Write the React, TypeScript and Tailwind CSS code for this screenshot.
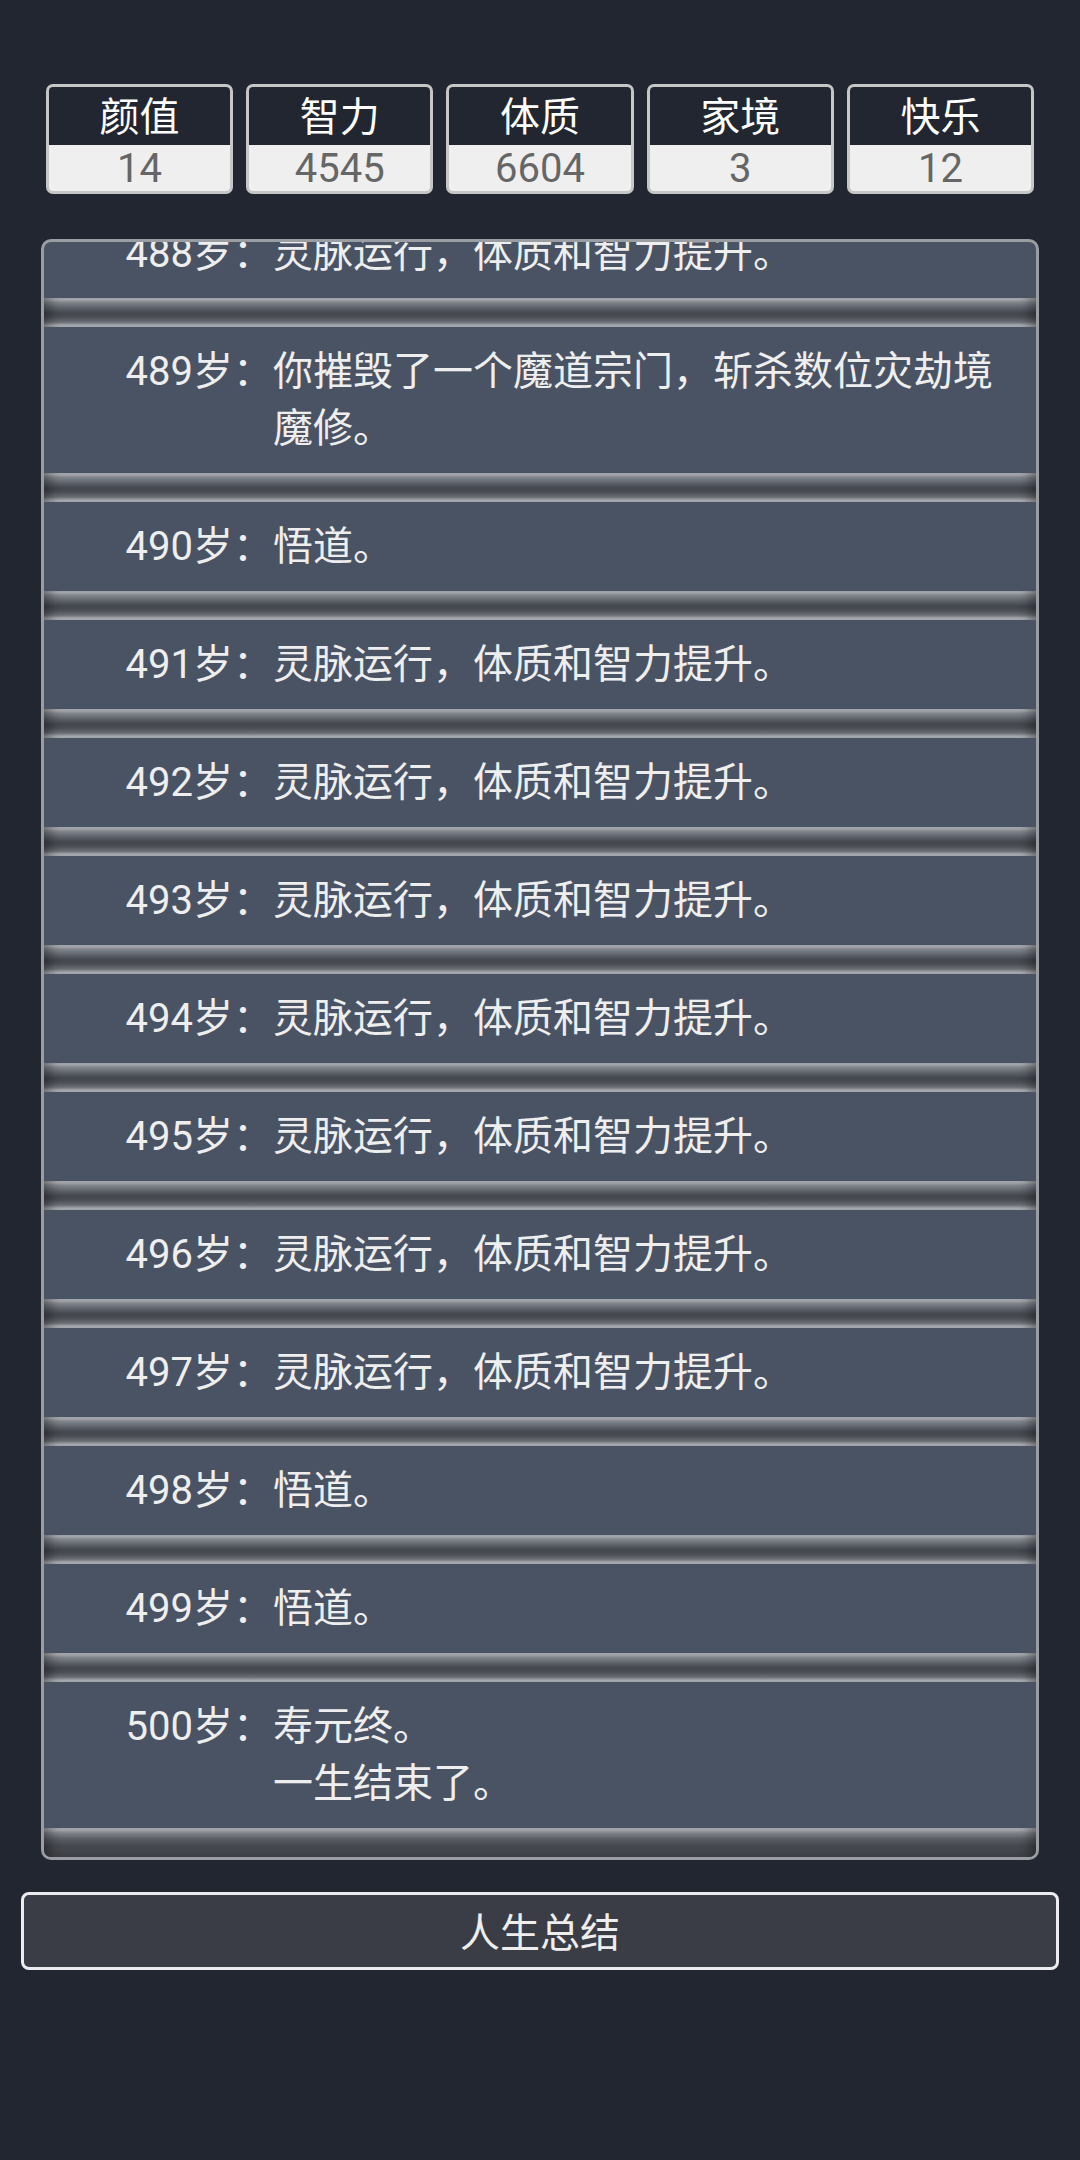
const stats = [
  { label: "颜值", value: "14" },
  { label: "智力", value: "4545" },
  { label: "体质", value: "6604" },
  { label: "家境", value: "3" },
  { label: "快乐", value: "12" },
];

const rows: { age: number; lines: string[] }[] = [
  { age: 488, lines: ["灵脉运行，体质和智力提升。"] },
  { age: 489, lines: ["你摧毁了一个魔道宗门，斩杀数位灾劫境魔修。"] },
  { age: 490, lines: ["悟道。"] },
  { age: 491, lines: ["灵脉运行，体质和智力提升。"] },
  { age: 492, lines: ["灵脉运行，体质和智力提升。"] },
  { age: 493, lines: ["灵脉运行，体质和智力提升。"] },
  { age: 494, lines: ["灵脉运行，体质和智力提升。"] },
  { age: 495, lines: ["灵脉运行，体质和智力提升。"] },
  { age: 496, lines: ["灵脉运行，体质和智力提升。"] },
  { age: 497, lines: ["灵脉运行，体质和智力提升。"] },
  { age: 498, lines: ["悟道。"] },
  { age: 499, lines: ["悟道。"] },
  { age: 500, lines: ["寿元终。", "一生结束了。"] },
];

function Groove({ last }: { last?: boolean }) {
  if (last) {
    return (
      <div className="h-[29px] shrink-0 bg-[linear-gradient(180deg,#a3a6ab_0px,#a3a6ab_2px,#7e828a_5px,#5a5d64_11px,#45484e_18px,#3f4147_29px)] shadow-[inset_16px_0_12px_-10px_rgba(0,0,0,0.35),inset_-16px_0_12px_-10px_rgba(0,0,0,0.35)]" />
    );
  }
  return (
    <div className="h-[29px] shrink-0 bg-[linear-gradient(180deg,#a3a6ab_0px,#a3a6ab_2px,#83878e_4px,#5c6068_10px,#44474e_15px,#4a4d54_19px,#6a6d74_24px,#8d9096_26px,#a6a9ae_27px,#a6a9ae_29px)] shadow-[inset_16px_0_12px_-10px_rgba(0,0,0,0.35),inset_-16px_0_12px_-10px_rgba(0,0,0,0.35)]" />
  );
}

export default function App() {
  return (
    <div className="min-h-[2160px] w-full bg-[#212630] font-[Roboto,'Noto_Sans_CJK_SC',sans-serif] pt-[84px]">
      {/* attribute boxes */}
      <div className="grid grid-cols-5 gap-[13px] px-[46px]">
        {stats.map((s) => (
          <div
            key={s.label}
            className="overflow-hidden rounded-[7px] border-[3px] border-[#c6c6c6] bg-[#efefef]"
          >
            <div className="h-[58px] bg-[#212630] pt-[4px] text-center text-[40px] leading-[54px] text-white">
              {s.label}
            </div>
            <div className="h-[46px] pt-[2px] text-center text-[40px] leading-[44px] text-[#666666]">
              {s.value}
            </div>
          </div>
        ))}
      </div>

      {/* life log */}
      <div className="mx-[41px] mt-[45px] flex h-[1621px] flex-col justify-end overflow-hidden rounded-[10px] border-[3px] border-[#9a9da2] bg-[#4a5363]">
        {rows.map((r, i) => (
          <div key={r.age} className="flex shrink-0 flex-col">
            <div className="flex py-[16px] pr-[30px] text-[40px] leading-[57px] text-[#eeeeee]">
              <div className="w-[229px] shrink-0 text-right">{r.age}岁：</div>
              <div className="flex-1">
                {r.lines.map((l) => (
                  <div key={l}>{l}</div>
                ))}
              </div>
            </div>
            <Groove last={i === rows.length - 1} />
          </div>
        ))}
      </div>

      <div className="mx-[21px] mt-[32px] flex h-[78px] items-center justify-center rounded-[8px] border-[3px] border-[#ececf0] bg-[#3a3d46] pt-[6px] text-[40px] text-[#eeeeee]">
        人生总结
      </div>
    </div>
  );
}
